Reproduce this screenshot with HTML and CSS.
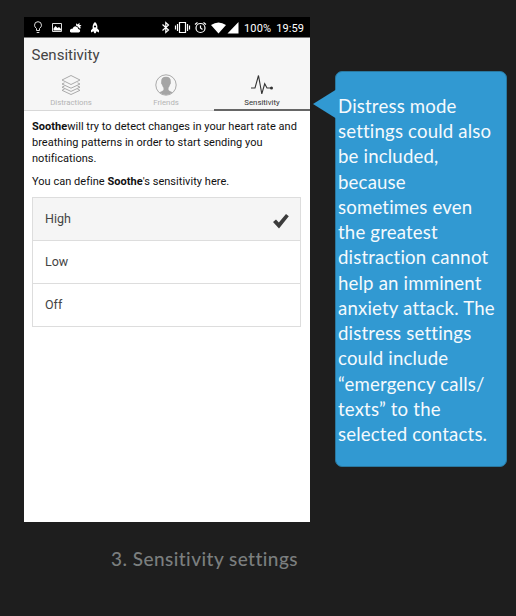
FILE: index.html
```html
<!DOCTYPE html>
<html lang="en">
<head>
<meta charset="utf-8">
<title>Sensitivity settings</title>
<link rel="stylesheet" href="styles.css">
</head>
<body>
<main class="board">
  <figure class="screen">
    <div class="phone">
      <div class="status">
        <svg class="status-left" width="80" height="20" viewBox="0 0 80 20" fill="none" stroke="#ddd" stroke-width="1">
          <path d="M12.500 13.500v-2q-2-1.500-2-3.300a3.500 3.500 0 0 1 7 0q0 1.800-2 3.300v2zM12.700 15.500h2.600"/>
          <path d="M28.500 6.500h9v8h-9z"/>
          <path fill="#fff" stroke="none" d="M29.500 13.500v-2l2-2.500 2 2 1.500-1 2 2v1.500zM47 15.500q-1.500-.5-1-2.500 1-1.800 2.500-1.200 1-3 3.500-2.400 2 .4 2.300 2.500 2.200.2 1.900 2.200-.3 1.400-1.500 1.400zM52 8.500l.2-2.300 1.400 1.200 2-1.700-.2 2.200 2.100.2-1.400 1.500.8 1.700-1.500.2q-1-2-3.400-3zM71 5q3 2.500 2.300 6.500l1.700 1.700v2.300l-2.500-1.200-.8 2h-1.400l-.8-2-2.500 1.200v-2.300l1.700-1.700Q68 7.500 71 5z"/>
          <circle cx="71" cy="9.500" r="1.100" fill="#000" stroke="none"/>
        </svg>
        <svg class="status-right" width="78" height="20" viewBox="0 0 78 20" fill="none" stroke="#fff" stroke-width="1.200">
          <path d="M1.500 7.500l6 5.500-2.700 2.500v-10L7.500 8l-6 5.500"/>
          <path d="M18.500 5.500h6v10h-6zM16.500 7v7M26.500 7v7M14.500 8.500v4M28.500 8.500v4"/>
          <circle cx="39.500" cy="11" r="4.500"/><path d="M39.500 8.500V11l2 1.500M34 7.500l2.500-2M45 7.500l-2.500-2"/>
          <path fill="#fff" stroke="none" d="M50 8q7.500-5 15 0L57.500 16.500zM66.500 16.500L77.500 5v11.500z"/>
        </svg>
        <span class="battery">100%</span>
        <span class="clock">19:59</span>
      </div>
      <header class="top">
        <h1>Sensitivity</h1>
        <nav class="tabs">
          <a class="tab">
            <svg width="24" height="24" viewBox="0 0 24 24" fill="none" stroke="#aaa" stroke-width="1"><path d="M12 2.500l9 4.500-9 4.500L3 7zM5.500 9.800L3 11l9 4.200 9-4.200-2.500-1.200M5.500 13L3 14.200l9 4.200 9-4.200-2.500-1.200M5.500 16.200L3 17.300l9 4.200 9-4.200-2.500-1.100"/></svg>
            <span>Distractions</span>
          </a>
          <a class="tab">
            <svg width="24" height="24" viewBox="0 0 24 24"><circle cx="12" cy="12" r="10.200" fill="none" stroke="#aaa"/><path fill="#a5a5a5" d="M12 3.800q5 0 4.800 5 .5 2-.8 3-.5 2-1.500 2.900v2.300q.5 1 4 2.200-3 2.800-6.500 2.800t-6.500-2.800q3.500-1.200 4-2.200v-2.300q-1-.9-1.500-2.900-1.300-1-.8-3-.2-5 4.800-5z"/></svg>
            <span>Friends</span>
          </a>
          <a class="tab active">
            <svg width="24" height="24" viewBox="0 0 24 24" fill="none" stroke="#333" stroke-width="1.100"><path d="M1 15h4L8.500 2.500l3.300 18.300 2.900-10L17 15h4.500"/><circle cx="21.500" cy="15" r="1.500" fill="#333" stroke="none"/></svg>
            <span>Sensitivity</span>
          </a>
        </nav>
      </header>
      <section class="content">
        <p><b>Soothe</b>will try to detect changes in your heart rate and<br>breathing patterns in order to start sending you<br>notifications.</p>
        <p>You can define <b>Soothe</b>'s sensitivity here.</p>
        <ul class="options">
          <li class="selected">High<svg width="18" height="18" viewBox="0 0 18 18"><path d="M1 10l3-2.500L6.800 10.500 14 2l2.800 2.200L7 16.500z" fill="#3c3c3c"/></svg></li>
          <li>Low</li>
          <li>Off</li>
        </ul>
      </section>
    </div>
    <figcaption>3. Sensitivity settings</figcaption>
  </figure>
  <aside class="note">
    <svg class="pointer" width="24" height="30" viewBox="0 0 24 30"><path d="M0 15L24 0v30z" fill="#3199d2"/></svg>
    <p>Distress mode<br>settings could also<br>be included,<br>because<br>sometimes even<br>the greatest<br>distraction cannot<br>help an imminent<br>anxiety attack. The<br>distress settings<br>could include<br>“emergency calls/<br>texts” to the<br>selected contacts.</p>
  </aside>
</main>
</body>
</html>
```

FILE: styles.css
```css
* { box-sizing: border-box; margin: 0; padding: 0; }
body { background: #1e1e1e; font-family: Roboto, sans-serif; }
.board { display: flex; align-items: flex-start; width: 516px; height: 616px; padding: 17px 0 0 24px; overflow: hidden; }
.screen { width: 286px; flex: none; }
.phone { height: 505px; background: #fff; }
.status { display: flex; align-items: center; height: 21px; background: #000; border-bottom: 1px solid #777; color: #fff; font-size: 11px; line-height: 20px; }
.status-right { margin-left: 57px; }
.battery { margin-left: 5px; padding-top: 3px; letter-spacing: .15px; }
.clock { margin-left: 5px; padding-top: 3px; letter-spacing: .1px; }
.top { height: 73px; background: #f6f6f6; border-bottom: 1px solid #d8d8d8; }
h1 { height: 34px; padding: 7px 0 0 7.500px; font-size: 15px; line-height: 20px; font-weight: 400; color: #444; }
.tabs { display: grid; grid-template-columns: 94px 96px 96px; height: 39px; }
.tab { display: flex; flex-direction: column; align-items: center; color: #b4b4b4; font-size: 7.800px; line-height: 10px; }
.tab svg { margin-top: 1px; }
.tab span { margin-top: 1px; }
.active { color: #333; border-bottom: 2px solid #666; }
.content { padding: 8px 9px 0 8px; color: #111; }
.content p { font-size: 11px; line-height: 15.800px; margin-bottom: 7.500px; letter-spacing: .03px; white-space: nowrap; }
.options { list-style: none; border: 1px solid #ddd; color: #444; font-size: 12.500px; }
.options li { display: flex; align-items: center; justify-content: space-between; height: 43px; padding: 0 10px 2px 12px; border-top: 1px solid #ddd; }
.options li:first-child { border-top: 0; height: 42px; }
.options .selected { background: #f5f5f5; }
.selected svg { margin-top: 6px; }
figcaption { margin: 24px 0 0 87px; font-family: Lato, sans-serif; font-size: 19px; line-height: 26px; letter-spacing: .45px; font-weight: 500; color: #7b7f7f; white-space: nowrap; }
.note { position: relative; flex: none; width: 172px; height: 396px; margin: 54px 0 0 25px; padding: 22px 0 0 2px; background: #3199d2; border: 1px solid #2a789f; border-radius: 7px; }
.pointer { position: absolute; left: -23px; top: 17px; }
.note p { font-family: Lato, sans-serif; font-size: 18.600px; line-height: 25.230px; letter-spacing: .18px; color: #f5fafd; white-space: nowrap; }
```
